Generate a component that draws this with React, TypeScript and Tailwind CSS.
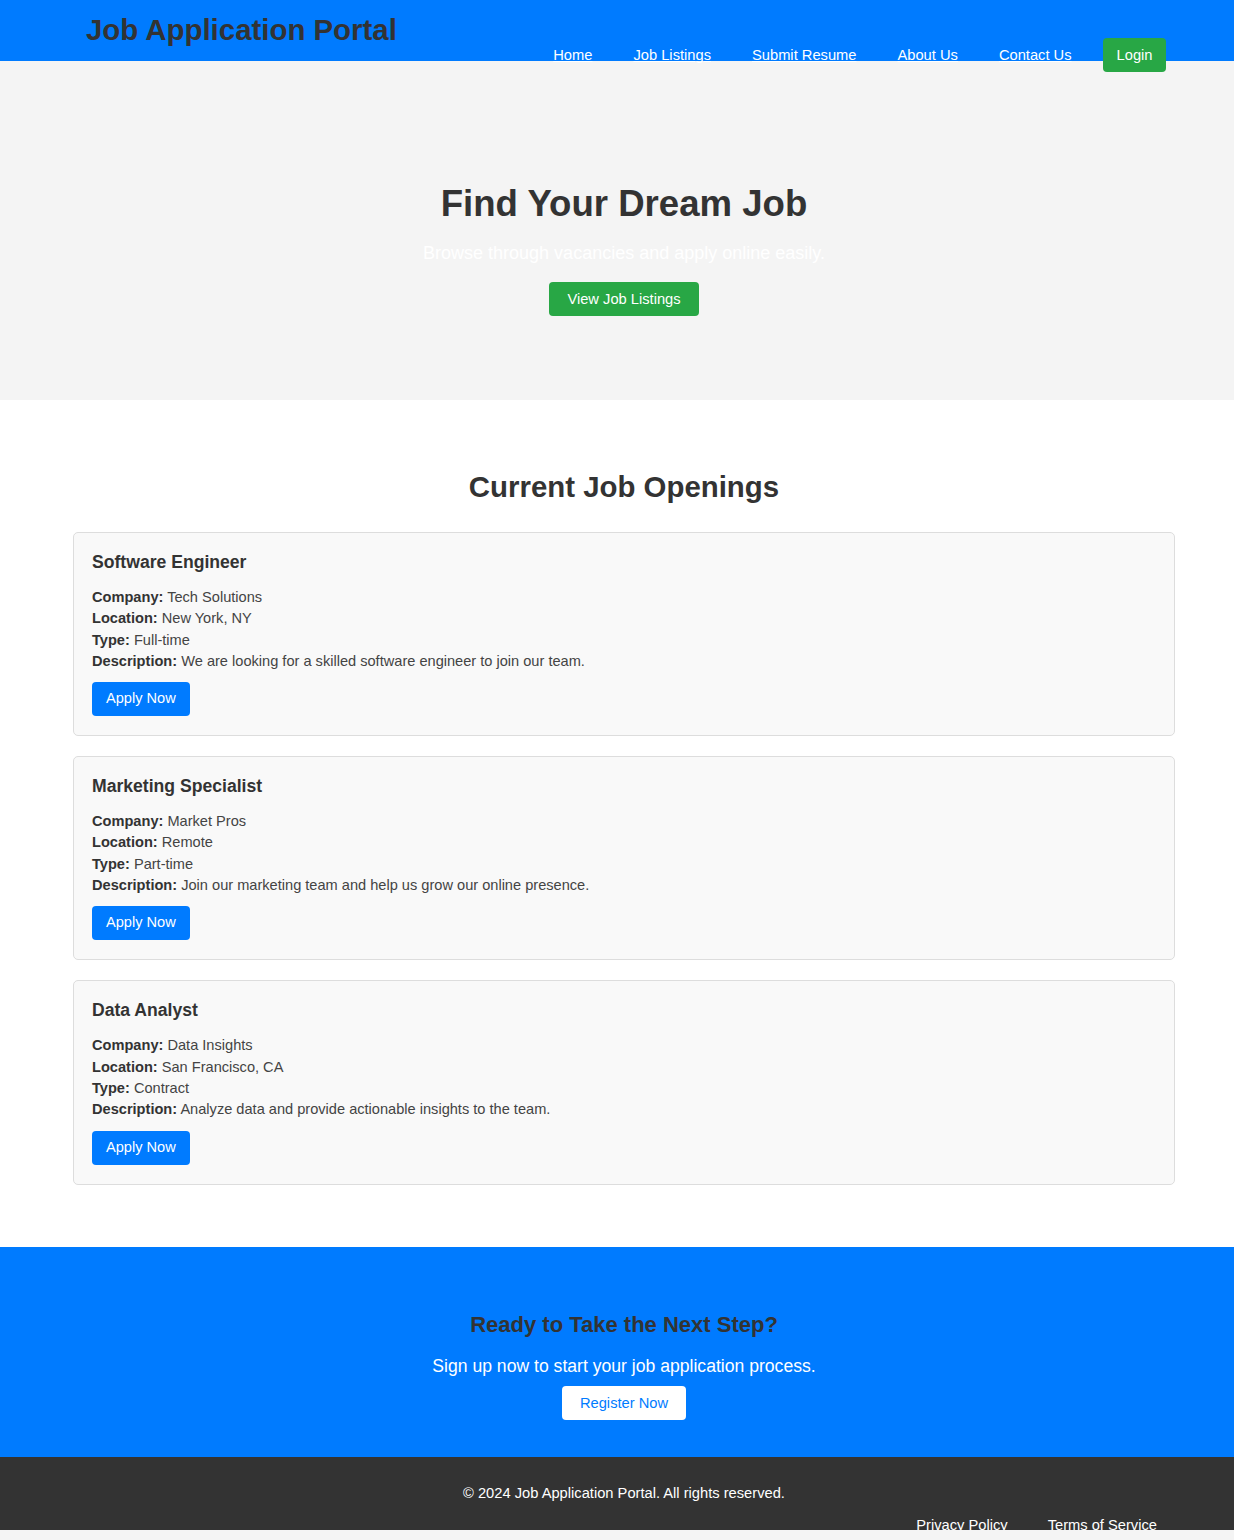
import React from "react";

const JOBS = [
  {
    title: "Software Engineer",
    company: "Tech Solutions",
    location: "New York, NY",
    type: "Full-time",
    description: "We are looking for a skilled software engineer to join our team.",
  },
  {
    title: "Marketing Specialist",
    company: "Market Pros",
    location: "Remote",
    type: "Part-time",
    description: "Join our marketing team and help us grow our online presence.",
  },
  {
    title: "Data Analyst",
    company: "Data Insights",
    location: "San Francisco, CA",
    type: "Contract",
    description: "Analyze data and provide actionable insights to the team.",
  },
];

const NAV = ["Home", "Job Listings", "Submit Resume", "About Us", "Contact Us"];

function JobCard({ job }: { job: (typeof JOBS)[number] }) {
  return (
    <div className="bg-[#f9f9f9] border border-[#ddd] rounded-[5px] px-[18px] pt-[18px] pb-[19px]">
      <h3 className="text-[17.6px] font-bold text-[#333] leading-[22px] mb-[14px]">{job.title}</h3>
      <div className="text-[14.6px] leading-[21.3px] text-[#444]">
        <p><b className="text-[#333]">Company:</b> {job.company}</p>
        <p><b className="text-[#333]">Location:</b> {job.location}</p>
        <p><b className="text-[#333]">Type:</b> {job.type}</p>
        <p><b className="text-[#333]">Description:</b> {job.description}</p>
      </div>
      <button className="mt-[10px] bg-[#007bff] text-white text-[14.6px] h-[34px] px-[14px] rounded-[4px]">
        Apply Now
      </button>
    </div>
  );
}

export default function App() {
  return (
    <div className="bg-[#f4f4f4] w-[1248px] min-h-[1540px] font-['Liberation_Sans',Arial,sans-serif] text-[#333]">
      {/* header */}
      <header className="relative z-10 bg-[#007bff] h-[61px] flex items-start justify-between pl-[86px] pr-[82px]">
        <h1 className="text-[29.4px] font-bold text-[#333] leading-[34px] mt-[13px]">Job Application Portal</h1>
        <nav className="flex items-center mt-[38px]">
          {NAV.map(n => (
            <a key={n} href="#" className="text-white underline text-[14.7px] mx-[20.5px] pt-[1px]">{n}</a>
          ))}
          <a href="#" className="ml-[11px] bg-[#28a745] text-white text-[14.7px] h-[34px] px-[13.5px] rounded-[4px] flex items-center">
            Login
          </a>
        </nav>
      </header>

      {/* hero */}
      <section className="bg-[#f4f4f4] h-[339px] flex flex-col items-center pt-[121px]">
        <h2 className="text-[36.6px] font-bold leading-[44px] text-[#333]">Find Your Dream Job</h2>
        <p className="text-white text-[18px] mt-[15px] leading-[24px]">Browse through vacancies and apply online easily.</p>
        <button className="mt-[17px] bg-[#28a745] text-white text-[14.7px] h-[34px] px-[18px] rounded-[4px]">
          View Job Listings
        </button>
      </section>

      {/* openings */}
      <section className="bg-white pt-[69px] pb-[62px] px-[73px]">
        <h2 className="text-center text-[29.4px] font-bold leading-[36px] text-[#333] mb-[27px]">Current Job Openings</h2>
        <div className="flex flex-col gap-[20px]">
          {JOBS.map(j => <JobCard key={j.title} job={j} />)}
        </div>
      </section>

      {/* call to action */}
      <section className="bg-[#007bff] h-[210px] flex flex-col items-center pt-[64px]">
        <h2 className="text-[22px] font-bold leading-[28px] text-[#333]">Ready to Take the Next Step?</h2>
        <p className="text-white text-[17.6px] mt-[15px] leading-[24px]">Sign up now to start your job application process.</p>
        <button className="mt-[8px] bg-white text-[#007bff] text-[14.7px] h-[34px] px-[18px] rounded-[4px]">
          Register Now
        </button>
      </section>

      {/* footer */}
      <footer className="bg-[#333] h-[73px] overflow-hidden flex flex-col items-center pt-[27px]">
        <p className="text-white text-[14.7px] leading-[18px]">© 2024 Job Application Portal. All rights reserved.</p>
        <div className="self-end flex gap-[40px] pr-[91px] mt-[14px]">
          <a href="#" className="text-white underline text-[14.7px] leading-[18px]">Privacy Policy</a>
          <a href="#" className="text-white underline text-[14.7px] leading-[18px]">Terms of Service</a>
        </div>
      </footer>
    </div>
  );
}
